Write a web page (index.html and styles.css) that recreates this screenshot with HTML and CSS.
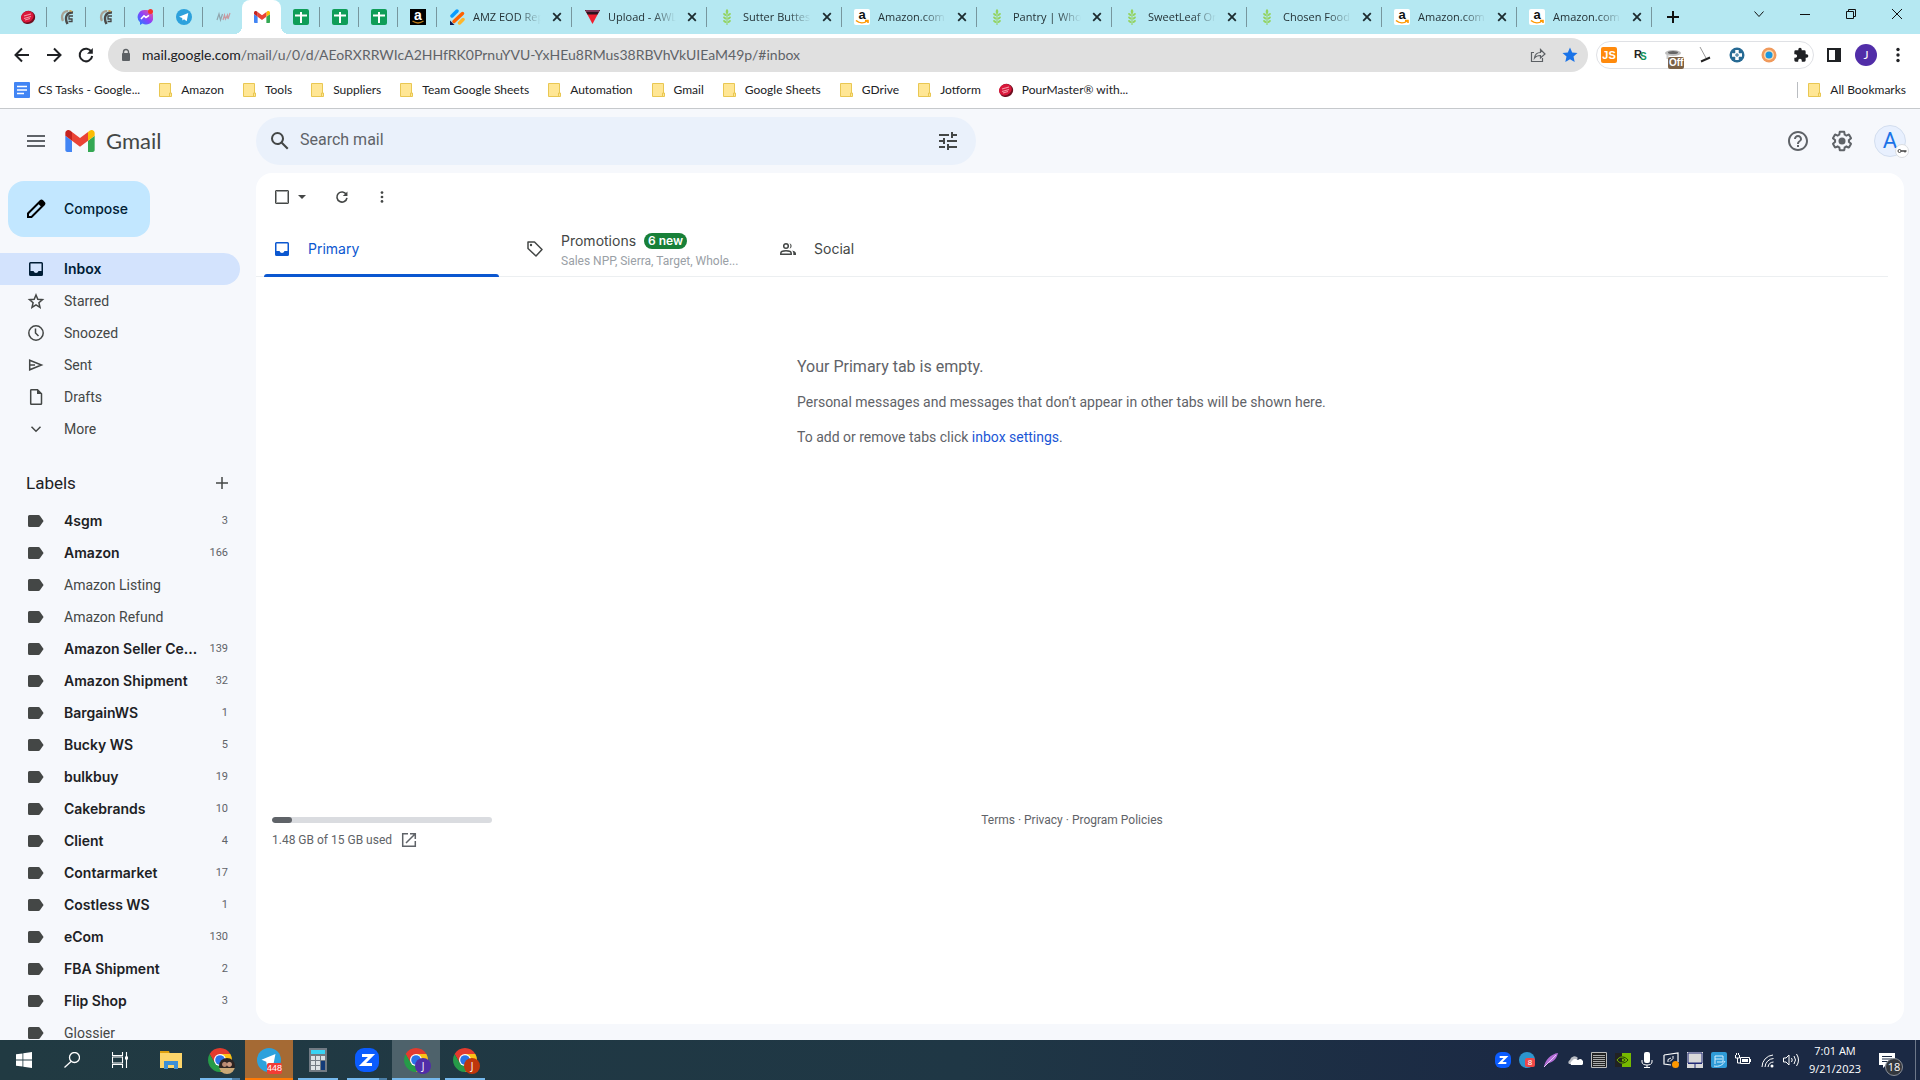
FILE: index.html
```html
<!DOCTYPE html>
<html lang="en">
<head>
<meta charset="utf-8">
<title>Inbox - Gmail</title>
<link rel="stylesheet" href="styles.css">
</head>
<body>
<svg class="sprite" aria-hidden="true">
  <symbol id="pour" viewBox="0 0 16 16"><ellipse cx="8" cy="8.500" rx="7" ry="6.500" fill="#6d0f20" transform="rotate(-25 8 8)"/><ellipse cx="7.500" cy="7.500" rx="6.500" ry="5.500" fill="#d9183b" transform="rotate(-25 8 8)"/><path d="M4 7l7-2M4 9.500l7-2M5 11l5-1.500" stroke="#f59aa8" stroke-width="1.200"/></symbol>
  <symbol id="swirl" viewBox="0 0 16 16"><path d="M9 2C4 2 1.500 7 4 12" fill="none" stroke="#a8a294" stroke-width="2.200"/><path d="M14 3.500C8 3 5 8 8.500 15" fill="none" stroke="#4a4a48" stroke-width="2.400"/><path d="M14 7H10v3h3v2.500H9.500" fill="none" stroke="#444" stroke-width="1.300"/><path d="M9 2l3-1 1.500 2z" fill="#d79a35"/></symbol>
  <symbol id="sheet" viewBox="0 0 16 16"><rect width="16" height="16" rx="2" fill="#0f9d58"/><path d="M8 3v11M2 6.500h12" stroke="#fff" stroke-width="2"/></symbol>
  <symbol id="gmail" viewBox="52 42 88 66"><path fill="#4285f4" d="M58 108h14V74L52 59v43c0 3.320 2.690 6 6 6"/><path fill="#34a853" d="M120 108h14c3.320 0 6-2.690 6-6V59l-20 15"/><path fill="#fbbc04" d="M120 48v26l20-15v-8c0-7.420-8.470-11.650-14.400-7.200"/><path fill="#ea4335" d="M72 74V48l24 18 24-18v26L96 92"/><path fill="#c5221f" d="M52 51v8l20 15V48l-5.600-4.200c-5.940-4.450-14.400-.220-14.400 7.200"/></symbol>
  <symbol id="amz" viewBox="0 0 16 16"><rect width="16" height="16" rx="2" fill="#fff"/><text x="8" y="10" text-anchor="middle" font-family="Liberation Sans, sans-serif" font-weight="700" font-size="13" fill="#111">a</text><path d="M2 11.500c3.500 3 8 3 11 .5M11 11.500h3v2.500" fill="none" stroke="#f90" stroke-width="1.600"/></symbol>
  <symbol id="amzdark" viewBox="0 0 16 16"><rect width="16" height="16" fill="#000"/><text x="8" y="10.500" text-anchor="middle" font-family="Liberation Sans, sans-serif" font-weight="700" font-size="14" fill="#fff">a</text><path d="M2.500 12c3.500 2.500 7.500 2.500 11 0" fill="none" stroke="#b97816" stroke-width="1.300"/></symbol>
  <symbol id="wheat" viewBox="0 0 16 16"><path d="M8 16V3" stroke="#8fcf5a"/><g fill="#93d35f"><ellipse cx="8" cy="2.500" rx="1.300" ry="2.200"/><ellipse cx="5.800" cy="5.500" rx="2" ry="1.100" transform="rotate(40 5.800 5.500)"/><ellipse cx="10.200" cy="5.500" rx="2" ry="1.100" transform="rotate(-40 10.200 5.500)"/><ellipse cx="5.800" cy="9" rx="2" ry="1.100" transform="rotate(40 5.800 9)"/><ellipse cx="10.200" cy="9" rx="2" ry="1.100" transform="rotate(-40 10.200 9)"/><ellipse cx="5.800" cy="12.500" rx="2" ry="1.100" transform="rotate(40 5.800 12.500)"/><ellipse cx="10.200" cy="12.500" rx="2" ry="1.100" transform="rotate(-40 10.200 12.500)"/></g></symbol>
  <symbol id="x" viewBox="0 0 16 16"><path d="M4.200 4.200l7.600 7.600M11.800 4.200l-7.600 7.600" stroke="#1c2b2f" stroke-width="1.800"/></symbol>
  <symbol id="tele" viewBox="0 0 16 16"><circle cx="8" cy="8" r="8" fill="#2da1dc"/><path d="M3 7.800l9.300-3.800-1.600 8.200-2.700-2-1.500 1.400-.3-2.500z" fill="#fff"/></symbol>
  <symbol id="folder" viewBox="0 0 16 16"><path d="M2.500 1.500h11v9.500h1v3.500h-12z" fill="#ffe694" stroke="#e9c752"/><path d="M12.500 14.500v-3.500h1.500" fill="none" stroke="#e9c752"/></symbol>
  <symbol id="label" viewBox="0 0 20 20"><path fill="#444746" d="M2 5.500A1.500 1.500 0 0 1 3.500 4h9c.6 0 1 .2 1.400.7L17.600 10l-3.700 5.300c-.4.500-.8.700-1.400.7h-9A1.500 1.500 0 0 1 2 14.500z"/></symbol>
  <symbol id="inbox" viewBox="0 0 20 20"><path fill="currentColor" fill-rule="evenodd" d="M4.500 3A1.500 1.500 0 0 0 3 4.500v11A1.500 1.500 0 0 0 4.500 17h11a1.500 1.500 0 0 0 1.500-1.500v-11A1.500 1.500 0 0 0 15.500 3zM4.500 4.500h11v7.500h-3l-1 1.500-1.500.5-1.500-.5-1-1.500h-3z"/></symbol>
  <symbol id="dots" viewBox="0 0 20 20"><g fill="currentColor"><circle cx="10" cy="4.500" r="1.700"/><circle cx="10" cy="10" r="1.700"/><circle cx="10" cy="15.500" r="1.700"/></g></symbol>
  <symbol id="reload" viewBox="0 0 20 20"><path d="M15.500 7A6.300 6.300 0 1 0 16.200 11" fill="none" stroke="currentColor" stroke-width="2"/><path d="M16.800 3v5.800H11z" fill="currentColor"/></symbol>
  <symbol id="chrome" viewBox="4 4 40 40"><path fill="#e33b2e" d="M6.680 14A20 20 0 0 1 41.320 14H24L15.340 29Z"/><path fill="#fbc116" d="M41.320 14A20 20 0 0 1 24 44L32.660 29 24 14Z"/><path fill="#269b48" d="M6.680 14A20 20 0 0 0 24 44L32.660 29H15.340Z"/><circle cx="24" cy="24" r="10" fill="#fff"/><circle cx="24" cy="24" r="8" fill="#2a73e8"/></symbol>
  <symbol id="zoomapp" viewBox="0 0 24 24"><rect width="24" height="24" rx="9" fill="#0b5cff"/><path d="M7 7.500h9.500L7.500 16.500H17" fill="none" stroke="#fff" stroke-width="3"/></symbol>
</svg>

<div class="browser">
  <div class="tabstrip">
    <div class="tab pinned"><svg class="i16"><use href="#pour"/></svg></div>
    <div class="tab pinned"><svg class="i16"><use href="#swirl"/></svg></div>
    <div class="tab pinned"><svg class="i16"><use href="#swirl"/></svg></div>
    <div class="tab pinned"><svg class="i16" viewBox="0 0 16 16"><defs><linearGradient id="ms" x1="0" y1="1" x2="1" y2="0"><stop offset="0" stop-color="#1688ff"/><stop offset=".5" stop-color="#8a3ffc"/><stop offset="1" stop-color="#ff5c87"/></linearGradient></defs><path fill="url(#ms)" d="M8 1a7 7 0 0 0-5 12.200V16l2.500-1.500A7.300 7.300 0 1 0 8 1z"/><path d="M4 10l3-3.200 2 1.600 3-2" fill="none" stroke="#fff" stroke-width="1.600"/><circle cx="13.500" cy="2.500" r="2.500" fill="#f5342b"/></svg></div>
    <div class="tab pinned"><svg class="i16"><use href="#tele"/></svg></div>
    <div class="tab pinned plain"><svg class="i16" viewBox="0 0 16 16"><path d="M2 11l2-6 1.500 6 2-6" fill="none" stroke="#8fa5ad" stroke-width="1.200"/><path d="M8 11l1.500-5 1 4 2-4 .5 4 2-6" fill="none" stroke="#c99aa0" stroke-width="1.200"/></svg></div>
    <div class="tab pinned plain active"><svg class="i16"><use href="#gmail"/></svg></div>
    <div class="tab pinned"><svg class="i16"><use href="#sheet"/></svg></div>
    <div class="tab pinned"><svg class="i16"><use href="#sheet"/></svg></div>
    <div class="tab pinned"><svg class="i16"><use href="#sheet"/></svg></div>
    <div class="tab pinned"><svg class="i16"><use href="#amzdark"/></svg></div>
    <div class="tab"><svg class="i16" viewBox="0 0 16 16"><g stroke-width="3.500" stroke-linecap="round"><path d="M3 7l5-5" stroke="#0a9bff"/><path d="M5 12.500l8.500-8" stroke="#ff6100"/><path d="M10.500 14l3.500-3.500" stroke="#ffb629"/></g><path d="M1 11.500V16h4.500z" fill="#0a1551"/></svg><span class="tab-title">AMZ EOD Rep</span><button class="close" aria-label="Close tab"><svg class="i16"><use href="#x"/></svg></button></div>
    <div class="tab"><svg class="i16" viewBox="0 0 16 16"><path d="M1 1h15L8.500 15z" fill="#ef1f2f"/><path d="M1 1h15l-2.500 4.500h-10z" fill="#2c1420"/><path d="M2 2h13" stroke="#c95a8d"/></svg><span class="tab-title">Upload - AWL</span><button class="close" aria-label="Close tab"><svg class="i16"><use href="#x"/></svg></button></div>
    <div class="tab"><svg class="i16"><use href="#wheat"/></svg><span class="tab-title">Sutter Buttes</span><button class="close" aria-label="Close tab"><svg class="i16"><use href="#x"/></svg></button></div>
    <div class="tab"><svg class="i16"><use href="#amz"/></svg><span class="tab-title">Amazon.com</span><button class="close" aria-label="Close tab"><svg class="i16"><use href="#x"/></svg></button></div>
    <div class="tab"><svg class="i16"><use href="#wheat"/></svg><span class="tab-title">Pantry | Whol</span><button class="close" aria-label="Close tab"><svg class="i16"><use href="#x"/></svg></button></div>
    <div class="tab"><svg class="i16"><use href="#wheat"/></svg><span class="tab-title">SweetLeaf Or</span><button class="close" aria-label="Close tab"><svg class="i16"><use href="#x"/></svg></button></div>
    <div class="tab"><svg class="i16"><use href="#wheat"/></svg><span class="tab-title">Chosen Food</span><button class="close" aria-label="Close tab"><svg class="i16"><use href="#x"/></svg></button></div>
    <div class="tab"><svg class="i16"><use href="#amz"/></svg><span class="tab-title">Amazon.com</span><button class="close" aria-label="Close tab"><svg class="i16"><use href="#x"/></svg></button></div>
    <div class="tab"><svg class="i16"><use href="#amz"/></svg><span class="tab-title">Amazon.com</span><button class="close" aria-label="Close tab"><svg class="i16"><use href="#x"/></svg></button></div>
    <button class="newtab" aria-label="New tab"><svg class="i16" viewBox="0 0 16 16"><path d="M8 2v12M2 8h12" stroke="#111" stroke-width="2"/></svg></button>
    <div class="window-controls">
      <button aria-label="Search tabs"><svg class="i16" viewBox="0 0 16 16"><path d="M3.500 5.500L8 10.500l4.500-5" fill="none" stroke="#111"/></svg></button>
      <button aria-label="Minimize"><svg class="i16" viewBox="0 0 16 16"><path d="M3 8.500h10" stroke="#111"/></svg></button>
      <button aria-label="Restore"><svg class="i16" viewBox="0 0 16 16"><path d="M3.500 5.500h7v7h-7zM5.500 5.500v-2h7v7h-2" fill="none" stroke="#111"/></svg></button>
      <button aria-label="Close"><svg class="i16" viewBox="0 0 16 16"><path d="M3 3l10 10M13 3L3 13" stroke="#111"/></svg></button>
    </div>
  </div>

  <div class="toolbar">
    <button class="nav-btn" aria-label="Back"><svg class="i20" viewBox="0 0 20 20"><path d="M17 10H4M10 3.500L3.500 10l6.500 6.500" fill="none" stroke="#1f2124" stroke-width="2"/></svg></button>
    <button class="nav-btn" aria-label="Forward"><svg class="i20" viewBox="0 0 20 20"><path d="M3 10h13M10 3.500l6.500 6.500-6.500 6.500" fill="none" stroke="#1f2124" stroke-width="2"/></svg></button>
    <button class="nav-btn" aria-label="Reload"><svg class="i20"><use href="#reload"/></svg></button>
    <div class="omnibox">
      <svg class="i16" viewBox="0 0 16 16"><rect x="4" y="6" width="8" height="8" rx="1" fill="#5c6064"/><path d="M5.500 7V5a2.500 2.500 0 0 1 5 0v2" fill="none" stroke="#5c6064" stroke-width="1.400"/></svg>
      <a class="url" href="#inbox"><span class="host">mail.google.com</span>/mail/u/0/d/AEoRXRRWIcA2HHfRK0PrnuYVU-YxHEu8RMus38RBVhVkUIEaM49p/#inbox</a>
      <button aria-label="Share"><svg class="i16" viewBox="0 0 16 16"><path d="M4 5.500H1.500v9h11V11M4.500 11c.5-4 3-5.500 6-5.500V2.500L15 7l-4.500 4V8.500c-3 0-4.500.5-6 2.500z" fill="none" stroke="#5c6064" stroke-width="1.200"/></svg></button>
      <button aria-label="Bookmark this tab"><svg class="i16" viewBox="0 0 16 16"><path fill="#1a73e8" d="M8 .5l2.200 5 5.300.5-4 3.600 1.200 5.400L8 12.200 3.300 15l1.200-5.400-4-3.600 5.300-.5z"/></svg></button>
    </div>
    <div class="extensions">
      <svg class="i16" viewBox="0 0 16 16"><rect width="16" height="16" rx="2" fill="#ff8a0c"/><text x="8" y="12" text-anchor="middle" font-family="Liberation Sans, sans-serif" font-weight="700" font-size="11" fill="#fff">JS</text></svg>
      <svg class="i16" viewBox="0 0 16 16"><text x="1" y="11" font-family="Liberation Sans, sans-serif" font-weight="700" font-size="11" fill="#222">R</text><text x="7" y="13" font-family="Liberation Sans, sans-serif" font-weight="700" font-size="10" fill="#12935b">S</text></svg>
      <span class="ext-off"><svg class="i16" viewBox="0 0 16 16"><ellipse cx="8" cy="6" rx="8" ry="3" fill="#bdbdbd"/><ellipse cx="8" cy="5.500" rx="5" ry="1.500" fill="#666"/><path d="M1.500 7v5h2V8z" fill="#c9c9c9"/></svg><span class="off-badge">Off</span></span>
      <svg class="i16" viewBox="0 0 16 16"><path d="M3 0l6 11" stroke="#999"/><path d="M4 14.500l9-4" stroke="#222" stroke-width="2"/></svg>
      <svg class="i16" viewBox="0 0 16 16"><circle cx="8" cy="8" r="7.500" fill="#276a94"/><path d="M8 3v10M3 8h10" stroke="#fff" stroke-width="3.500"/><path d="M6 8h4M8 6v4" stroke="#276a94"/></svg>
      <svg class="i16" viewBox="0 0 16 16"><circle cx="8" cy="8" r="7.500" fill="#f09a5c"/><circle cx="8" cy="8" r="5" fill="#fbd9ae"/><circle cx="8" cy="8" r="3.500" fill="#1a96df"/></svg>
      <svg class="i16" viewBox="0 0 24 24"><path fill="#1f2124" d="M20.500 11H19V7a2 2 0 0 0-2-2h-4V3.500a2.500 2.500 0 0 0-5 0V5H4a2 2 0 0 0-2 2v3.800h1.500a2.700 2.700 0 0 1 0 5.400H2V20a2 2 0 0 0 2 2h3.800v-1.500a2.700 2.700 0 0 1 5.400 0V22H17a2 2 0 0 0 2-2v-4h1.500a2.500 2.500 0 0 0 0-5z"/></svg>
    </div>
    <div class="toolbar-end">
      <button aria-label="Side panel"><svg class="i16" viewBox="0 0 16 16"><path fill="#1f2124" fill-rule="evenodd" d="M1 1h14v14H1zM3 3h6v10H3z"/></svg></button>
      <button aria-label="Profile"><span class="profile">J</span></button>
      <button aria-label="Browser menu"><svg class="i20"><use href="#dots"/></svg></button>
    </div>
  </div>

  <nav class="bookmarks" aria-label="Bookmarks">
    <a href="#cs"><svg class="i16" viewBox="0 0 16 16"><rect width="16" height="16" rx="1" fill="#4285f4"/><path d="M3 4.500h10M3 8h10M3 11.500h7" stroke="#fff" stroke-width="1.500"/></svg>CS Tasks - Google...</a>
    <a href="#amazon"><svg class="i16"><use href="#folder"/></svg>Amazon</a>
    <a href="#tools"><svg class="i16"><use href="#folder"/></svg>Tools</a>
    <a href="#suppliers"><svg class="i16"><use href="#folder"/></svg>Suppliers</a>
    <a href="#team"><svg class="i16"><use href="#folder"/></svg>Team Google Sheets</a>
    <a href="#automation"><svg class="i16"><use href="#folder"/></svg>Automation</a>
    <a href="#gmail-folder"><svg class="i16"><use href="#folder"/></svg>Gmail</a>
    <a href="#sheets"><svg class="i16"><use href="#folder"/></svg>Google Sheets</a>
    <a href="#gdrive"><svg class="i16"><use href="#folder"/></svg>GDrive</a>
    <a href="#jotform"><svg class="i16"><use href="#folder"/></svg>Jotform</a>
    <a href="#pourmaster"><svg class="i16"><use href="#pour"/></svg>PourMaster® with...</a>
    <a class="all" href="#all"><svg class="i16"><use href="#folder"/></svg>All Bookmarks</a>
  </nav>
</div>

<div class="app">
  <header class="header">
    <div class="brand">
      <button aria-label="Main menu"><svg class="i20" viewBox="0 0 20 20"><path d="M1 5h18M1 10h18M1 15h18" stroke="#5f6368" stroke-width="2"/></svg></button>
      <a class="logo" href="#inbox"><svg class="gmail-mark"><use href="#gmail"/></svg>Gmail</a>
    </div>
    <form class="search" role="search">
      <svg class="i24" viewBox="0 0 24 24"><path fill="#444746" d="M20.490 19l-5.730-5.730C15.530 12.200 16 10.910 16 9.500A6.500 6.500 0 1 0 9.500 16c1.410 0 2.700-.470 3.770-1.240L19 20.490 20.490 19zM5 9.500C5 7.010 7.010 5 9.500 5S14 7.010 14 9.500 11.990 14 9.500 14 5 11.990 5 9.500z"/></svg>
      <input type="text" aria-label="Search mail" placeholder="Search mail">
      <button type="button" aria-label="Search options"><svg class="i24" viewBox="0 0 24 24"><path fill="#444746" d="M3 17v2h6v-2H3zM3 5v2h10V5H3zm10 16v-2h8v-2h-8v-2h-2v6h2zM7 9v2H3v2h4v2h2V9H7zm14 4v-2H11v2h10zm-6-4h2V7h4V5h-4V3h-2v6z"/></svg></button>
    </form>
    <div class="account">
      <button aria-label="Support"><svg class="i24" viewBox="0 0 24 24"><path fill="#5f6368" d="M11 18h2v-2h-2v2zm1-16C6.480 2 2 6.480 2 12s4.480 10 10 10 10-4.480 10-10S17.520 2 12 2zm0 18c-4.410 0-8-3.590-8-8s3.590-8 8-8 8 3.590 8 8-3.590 8-8 8zm0-14c-2.210 0-4 1.790-4 4h2c0-1.100.9-2 2-2s2 .9 2 2c0 2-3 1.750-3 5h2c0-2.250 3-2.500 3-5 0-2.210-1.790-4-4-4z"/></svg></button>
      <button aria-label="Settings"><svg class="i24" viewBox="0 0 24 24"><path fill="#5f6368" d="M13.850 22.250h-3.700c-.74 0-1.360-.54-1.450-1.270l-.27-1.890c-.27-.14-.53-.29-.79-.46l-1.800.72c-.7.260-1.470-.03-1.810-.65L2.200 15.530c-.35-.66-.2-1.440.36-1.880l1.530-1.190c-.01-.15-.02-.3-.02-.46 0-.15.010-.31.020-.46l-1.520-1.190c-.59-.45-.74-1.260-.37-1.880l1.850-3.190c.34-.62 1.110-.9 1.790-.63l1.810.73c.26-.17.52-.32.78-.46l.27-1.910c.09-.7.71-1.250 1.440-1.250h3.700c.74 0 1.360.54 1.450 1.270l.27 1.890c.27.14.53.29.79.46l1.800-.72c.71-.26 1.480.03 1.820.65l1.840 3.180c.36.66.2 1.440-.36 1.880l-1.520 1.190c.010.15.020.3.020.46s-.01.31-.02.46l1.520 1.190c.56.45.72 1.230.37 1.860l-1.860 3.220c-.34.62-1.110.9-1.800.63l-1.800-.72c-.26.17-.52.32-.78.46l-.27 1.910c-.1.680-.72 1.220-1.460 1.220zm-3.230-2h2.760l.37-2.550.53-.22c.44-.18.88-.44 1.340-.78l.45-.34 2.380.96 1.380-2.400-2.030-1.580.07-.56c.03-.26.06-.51.06-.78s-.03-.53-.06-.78l-.07-.56 2.030-1.580-1.390-2.400-2.390.96-.45-.35c-.42-.32-.87-.58-1.330-.77l-.52-.22-.37-2.550h-2.760l-.37 2.550-.53.21c-.44.19-.88.44-1.340.79l-.45.33-2.380-.95-1.390 2.390 2.030 1.580-.07.56a7 7 0 0 0-.06.79c0 .26.02.53.06.78l.07.56-2.030 1.580 1.380 2.400 2.390-.96.45.35c.43.33.86.58 1.330.77l.53.22.38 2.550z"/><circle cx="12" cy="12" r="3.500" fill="#5f6368"/></svg></button>
      <button class="avatar" aria-label="Account">A<svg class="key" viewBox="0 0 14 14"><circle cx="7" cy="7" r="6.500" fill="#fff" stroke="#dadce0"/><circle cx="4.500" cy="7" r="1.500" fill="none" stroke="#444"/><path d="M6 7h5.500M10 7v1.500" stroke="#444" stroke-width="1.300"/></svg></button>
    </div>
  </header>

  <aside class="sidebar">
    <button class="compose"><svg class="i24" viewBox="0 0 24 24"><path d="M4 20v-3.500L16.500 4c.6-.6 1.300-.6 1.900 0L20 5.600c.6.6.6 1.300 0 1.900L7.500 20z" fill="none" stroke="#000" stroke-width="2"/><path d="M14 6.500L16.500 4c.6-.6 1.300-.6 1.900 0L20 5.600c.6.6.6 1.300 0 1.900L17.500 10z"/></svg>Compose</button>
    <nav aria-label="Mailboxes">
      <a class="row selected" href="#inbox"><svg class="i20"><use href="#inbox"/></svg><span>Inbox</span></a>
      <a class="row" href="#starred"><svg class="i20" viewBox="0 0 20 20"><path d="M10 4l1.800 4.300 4.700.4-3.600 3 1.100 4.600-4-2.500-4 2.500 1.100-4.600-3.600-3 4.700-.4z" fill="none" stroke="#444746" stroke-width="1.500"/></svg><span>Starred</span></a>
      <a class="row" href="#snoozed"><svg class="i20" viewBox="0 0 20 20"><circle cx="10" cy="10" r="7.200" fill="none" stroke="#444746" stroke-width="1.500"/><path d="M9.500 5.500V10l3 3" fill="none" stroke="#444746" stroke-width="1.500"/></svg><span>Snoozed</span></a>
      <a class="row" href="#sent"><svg class="i20" viewBox="0 0 20 20"><path d="M3.700 5.200L15.500 10 3.700 14.800zM3.700 10H9" fill="none" stroke="#444746" stroke-width="1.500"/></svg><span>Sent</span></a>
      <a class="row" href="#drafts"><svg class="i20" viewBox="0 0 20 20"><path d="M5.500 2.700h6l4 4v10c0 .4-.2.600-.6.600H5.300c-.4 0-.6-.2-.6-.6V3.300c0-.4.200-.6.800-.6z" fill="none" stroke="#444746" stroke-width="1.500"/><path d="M11 2.500V7h5z" fill="#444746"/></svg><span>Drafts</span></a>
      <a class="row" href="#more"><svg class="i20" viewBox="0 0 20 20"><path d="M5.500 7.800L10 12.200l4.500-4.400" fill="none" stroke="#444746" stroke-width="1.500"/></svg><span>More</span></a>
    </nav>
    <div class="labels-head"><h2>Labels</h2><button aria-label="Create new label"><svg class="i20" viewBox="0 0 20 20"><path d="M10 4v12M4 10h12" stroke="#444746" stroke-width="1.500"/></svg></button></div>
    <nav aria-label="Labels">
      <a class="row unread" href="#l1"><svg class="i20"><use href="#label"/></svg><span>4sgm</span><small>3</small></a>
      <a class="row unread" href="#l2"><svg class="i20"><use href="#label"/></svg><span>Amazon</span><small>166</small></a>
      <a class="row" href="#l3"><svg class="i20"><use href="#label"/></svg><span>Amazon Listing</span></a>
      <a class="row" href="#l4"><svg class="i20"><use href="#label"/></svg><span>Amazon Refund</span></a>
      <a class="row unread" href="#l5"><svg class="i20"><use href="#label"/></svg><span>Amazon Seller Ce...</span><small>139</small></a>
      <a class="row unread" href="#l6"><svg class="i20"><use href="#label"/></svg><span>Amazon Shipment</span><small>32</small></a>
      <a class="row unread" href="#l7"><svg class="i20"><use href="#label"/></svg><span>BargainWS</span><small>1</small></a>
      <a class="row unread" href="#l8"><svg class="i20"><use href="#label"/></svg><span>Bucky WS</span><small>5</small></a>
      <a class="row unread" href="#l9"><svg class="i20"><use href="#label"/></svg><span>bulkbuy</span><small>19</small></a>
      <a class="row unread" href="#l10"><svg class="i20"><use href="#label"/></svg><span>Cakebrands</span><small>10</small></a>
      <a class="row unread" href="#l11"><svg class="i20"><use href="#label"/></svg><span>Client</span><small>4</small></a>
      <a class="row unread" href="#l12"><svg class="i20"><use href="#label"/></svg><span>Contarmarket</span><small>17</small></a>
      <a class="row unread" href="#l13"><svg class="i20"><use href="#label"/></svg><span>Costless WS</span><small>1</small></a>
      <a class="row unread" href="#l14"><svg class="i20"><use href="#label"/></svg><span>eCom</span><small>130</small></a>
      <a class="row unread" href="#l15"><svg class="i20"><use href="#label"/></svg><span>FBA Shipment</span><small>2</small></a>
      <a class="row unread" href="#l16"><svg class="i20"><use href="#label"/></svg><span>Flip Shop</span><small>3</small></a>
      <a class="row" href="#l17"><svg class="i20"><use href="#label"/></svg><span>Glossier</span></a>
    </nav>
  </aside>

  <main class="card">
    <div class="actions">
      <input type="checkbox" aria-label="Select all">
      <button class="caret" aria-label="Select options"><svg viewBox="0 0 8 4"><path d="M0 0h8L4 4z" fill="#444746"/></svg></button>
      <button class="refresh" aria-label="Refresh"><svg class="i16" viewBox="0 0 20 20"><use href="#reload"/></svg></button>
      <button aria-label="More actions"><svg class="i16" viewBox="0 0 20 20"><use href="#dots"/></svg></button>
    </div>
    <div class="categories" role="tablist">
      <button class="category current" role="tab" aria-selected="true"><svg class="i20"><use href="#inbox"/></svg><span>Primary</span></button>
      <button class="category" role="tab" aria-selected="false"><svg class="i20" viewBox="0 0 20 20"><path d="M3 3h6.500l7.500 7.500-6 6.500L3 9.500z" fill="none" stroke="#444746" stroke-width="1.500" stroke-linejoin="round"/><circle cx="6" cy="6" r="1.200" fill="#444746"/></svg><span class="stack"><span class="promo">Promotions <b class="badge">6 new</b></span><span class="senders">Sales NPP, Sierra, Target, Whole...</span></span></button>
      <button class="category" role="tab" aria-selected="false"><svg class="i20" viewBox="0 0 20 20"><g fill="none" stroke="#444746" stroke-width="1.500"><circle cx="8" cy="7" r="2.300"/><path d="M2.800 15.200v-1c0-1.700 2.700-2.500 5.200-2.500s5.200.8 5.200 2.500v1z"/></g><path d="M11.500 4.200a2.900 2.900 0 0 1 0 5.600c1.300-1.700 1.300-3.900 0-5.600zM14 11.500c2.200.5 4 1.400 4 3V16h-2.700v-1.700c0-1.100-.5-2-1.300-2.800z" fill="#444746"/></svg><span>Social</span></button>
    </div>
    <section class="empty">
      <div class="empty-text">
        <h1>Your Primary tab is empty.</h1>
        <p>Personal messages and messages that don’t appear in other tabs will be shown here.</p>
        <p>To add or remove tabs click <a href="#settings">inbox settings</a>.</p>
      </div>
    </section>
    <footer class="footer">
      <div class="storage">
        <div class="meter"><div class="meter-fill"></div></div>
        <div class="usage">1.48 GB of 15 GB used <a href="#storage" aria-label="Manage storage"><svg class="i16" viewBox="0 0 16 16"><path d="M7 1.700H1.700v12.600h12.600V9M5 11L14 2M9 1.700h5.300V7" fill="none" stroke="#5f6368" stroke-width="1.500"/></svg></a></div>
      </div>
      <div class="legal"><a href="#terms">Terms</a> · <a href="#privacy">Privacy</a> · <a href="#policies">Program Policies</a></div>
    </footer>
  </main>
</div>

<div class="taskbar">
  <button aria-label="Start"><svg class="i16" viewBox="0 0 16 16"><path fill="#fff" d="M0 2.300l6.500-.9v6.200H0zM7.300 1.300L16 0v7.600H7.300zM0 8.400h6.500v6.200L0 13.700zM7.300 8.400H16V16l-8.700-1.300z"/></svg></button>
  <button aria-label="Search"><svg class="i16" viewBox="0 0 16 16"><circle cx="10.500" cy="5.500" r="5" fill="none" stroke="#fff" stroke-width="1.300"/><path d="M7 9.500L.5 15.500" stroke="#fff" stroke-width="1.300"/></svg></button>
  <button aria-label="Task view"><svg class="i16" viewBox="0 0 16 16"><path d="M.5 0v3.500h10V0M.5 16v-3.500h10V16M.5 5v6h10V5zM14.500 0v16" fill="none" stroke="#fff" stroke-width="1.100"/><path d="M13 4.500h3v3h-3z" fill="#fff"/></svg></button>
  <div class="apps">
    <button aria-label="File Explorer"><svg class="i24" viewBox="0 0 24 24"><path fill="#e0a10f" d="M1 3h9l1 3H1z"/><path fill="#fdd56a" d="M1 5h22v15H1z"/><path fill="#3d8fd6" d="M5 21v-8h14v8h-4v-4H9v4z"/></svg></button>
    <button class="open multi" aria-label="Chrome"><svg class="i24"><use href="#chrome"/></svg><span class="mini photo"></span></button>
    <button class="open alert" aria-label="Telegram"><svg class="i24"><use href="#tele"/></svg><span class="count">448</span></button>
    <button class="open" aria-label="Calculator"><svg class="i24" viewBox="0 0 24 24"><path fill="#727b84" d="M3 0h18v24H3z"/><path fill="#38d3f5" d="M5 2h14v4H5z"/><path d="M5 10h9M5 15h9M5 20h9" stroke="#dce2e6" stroke-width="4" stroke-dasharray="4 1"/><path fill="#dce2e6" d="M15 8h4v4h-4z"/><path fill="#123a78" d="M15 13h4v9h-4z"/></svg></button>
    <button class="open multi" aria-label="Zoom"><svg class="i24"><use href="#zoomapp"/></svg></button>
    <button class="open focused" aria-label="Chrome, profile J"><svg class="i24"><use href="#chrome"/></svg><span class="mini">J</span></button>
    <button class="open" aria-label="Chrome, second profile"><svg class="i24"><use href="#chrome"/></svg><span class="mini orange">J</span></button>
  </div>
  <div class="tray">
    <span><svg class="i16"><use href="#zoomapp"/></svg></span>
    <span><svg class="i16" viewBox="0 0 16 16"><circle cx="8" cy="8" r="8" fill="#2d95cd"/><rect x="6" y="6" width="10" height="9" rx="2" fill="#f04747"/><text x="11" y="13" text-anchor="middle" font-family="Liberation Sans, sans-serif" font-size="8" fill="#fff">8</text></svg></span>
    <span><svg class="i16" viewBox="0 0 16 16"><path fill="#b46fd8" d="M1 15C2 8 8 2 15 1c-1 5-5 10-11 10.500z"/><path d="M1 15L13 3" stroke="#e7c7f7"/></svg></span>
    <span><svg class="i16" viewBox="0 0 16 16"><path fill="#b9bcc4" d="M3 8a4.500 4.500 0 0 1 8-2l-6 6H2a2.500 2.500 0 0 1 1-4z"/><path fill="#fff" d="M4 13a3 3 0 0 1 1-4 4 4 0 0 1 6-1 3 3 0 0 1 4 5z"/></svg></span>
    <span><svg class="i16" viewBox="0 0 16 16"><path fill="#222" stroke="#bbb" d="M.5.500h15v15H.5z"/><path d="M2 3.500h12M2 5.500h12M2 7.500h12M2 9.500h12M2 11.500h12M2 13.500h12" stroke="#aaa"/></svg></span>
    <span><svg class="i16" viewBox="0 0 16 16"><path fill="#222" d="M0 1h16v14H0z"/><path fill="#76b900" d="M7 1h9v14H7z"/><path d="M2 8c3-4 8-4 11 0-3 4-8 4-11 0zM5 8c1-2 4-2 5 0-1 2-4 2-5 0z" fill="none" stroke="#263c05"/><path d="M2 8c1.500-2 3-3 5-3M2 8c1.500 2 3 3 5 3" fill="none" stroke="#76b900"/></svg></span>
    <span><svg class="i16" viewBox="0 0 16 16"><rect x="5" y="0" width="6" height="11" rx="2" fill="#fff"/><path d="M3 8v2c0 2 2 3 5 3s5-1 5-3V8M8 13v3M5 15.500h6" fill="none" stroke="#fff"/></svg></span>
    <span><svg class="i16" viewBox="0 0 16 16"><path d="M1 3l14-2v9M1 3v9l7 1" fill="none" stroke="#fff" stroke-width="1.200"/><path d="M5 10V7.500l3-1.500M10 4v2.500l-3 3" fill="none" stroke="#fff"/><circle cx="12.500" cy="12.500" r="3.500" fill="#ff9800"/></svg></span>
    <span><svg class="i16" viewBox="0 0 16 16"><path fill="#d9d9d9" d="M0 0h16v16H0z"/><path d="M1 1h14v10H1zM1 11.500h14M8 11v5" fill="none" stroke="#222b77"/></svg></span>
    <span><svg class="i16" viewBox="0 0 16 16"><rect width="16" height="16" rx="2" fill="#2f9bd8"/><path d="M4 12V4h8v6H6M4 7h7M3 14c5 1 9-1 11-5" fill="none" stroke="#d7f0ff"/></svg></span>
    <span><svg class="i16" viewBox="0 0 16 16"><path d="M5.500 5.500h9v6h-9zM.5 3v3h4V3M1.500 1v2M3.500 1v2M2.500 6v5h3" fill="none" stroke="#fff"/><path fill="#fff" d="M7 7h6v3H7zM15 7h1v3h-1z"/></svg></span>
    <span><svg class="i16" viewBox="0 0 16 16"><path d="M3 15A12 12 0 0 1 14 3M6 15a9 9 0 0 1 8.500-8.500M9 15a6 6 0 0 1 5.500-5" fill="none" stroke="#fff"/><circle cx="13" cy="14" r="1.500" fill="#fff"/></svg></span>
    <span><svg class="i16" viewBox="0 0 16 16"><path d="M.5 6h2.500l3-3v10l-3-3H.5zM8.500 6q1.500 2 0 4M11 4q3 4 0 8M13.500 2q4 6 0 12" fill="none" stroke="#fff"/></svg></span>
  </div>
  <div class="clock"><span>7:01 AM</span><span>9/21/2023</span></div>
  <button class="notify" aria-label="Notifications"><svg class="i16" viewBox="0 0 16 16"><path fill="#fff" d="M0 1h16v12H7l-3 3v-3H0z"/><path d="M3 4.500h10M3 7h10M3 9.500h7" stroke="#1b2a44"/></svg><span class="notify-count">18</span></button>
  <div class="desktop-peek"></div>
</div>
</body>
</html>
```
FILE: styles.css
```css
* { box-sizing: border-box; }
html, body { margin: 0; height: 100%; }
body {
  display: flex;
  flex-direction: column;
  overflow: hidden;
  font: 14px/20px Roboto, "Liberation Sans", sans-serif;
  color: #202124;
  background: #f6f8fc;
}
button { border: 0; padding: 0; margin: 0; background: none; font: inherit; color: inherit; display: flex; align-items: center; justify-content: center; }
a { color: inherit; text-decoration: none; }
svg { display: block; flex: none; }
.sprite { position: absolute; width: 0; height: 0; }
.i16 { width: 16px; height: 16px; }
.i20 { width: 20px; height: 20px; }
.i24 { width: 24px; height: 24px; }

/* Browser frame */
.browser { flex: none; background: #fff; font: 12px/16px Lato, "Open Sans", sans-serif; border-bottom: 1px solid #c6c9cc; }
.tabstrip { display: flex; height: 34px; padding-left: 8px; background: #b5e8f2; }
.tab { position: relative; display: flex; align-items: center; gap: 8px; flex: 0 1 135px; min-width: 0; padding: 0 7px 0 12px; }
.tab.pinned { flex: 0 0 39px; padding: 0; justify-content: center; }
.tab::after { content: ""; position: absolute; right: 0; top: 7px; width: 1px; height: 20px; background: #77969e; }
.tab.plain::after { display: none; }
.tab.active { background: #fff; border-radius: 8px 8px 0 0; }
.tab.active::before, .tab.active::after { content: ""; display: block; position: absolute; top: auto; bottom: 0; width: 8px; height: 8px; }
.tab.active::before { left: -8px; background: radial-gradient(circle at 0 0, transparent 8px, #fff 8px); }
.tab.active::after { right: -8px; background: radial-gradient(circle at 100% 0, transparent 8px, #fff 8px); }
.tab-title { flex: 1; min-width: 0; font: 11px/16px "Open Sans", sans-serif; white-space: nowrap; color: #243236; -webkit-mask-image: linear-gradient(to right, #000 65%, transparent); mask-image: linear-gradient(to right, #000 65%, transparent); }
.newtab { width: 28px; height: 34px; margin-left: 7px; }
.window-controls { display: flex; margin-left: auto; height: 28px; }
.window-controls button { width: 46px; }

.toolbar { display: flex; align-items: center; gap: 4px; height: 42px; padding: 0 6px 0 8px; }
.nav-btn { width: 28px; height: 28px; color: #1f2124; }
.omnibox { display: flex; align-items: center; flex: 1; min-width: 0; height: 34px; margin-left: 4px; padding: 0 10px; gap: 16px; border-radius: 17px; background: #e0e0e0; }
.url { flex: 1; min-width: 0; margin-left: -8px; white-space: nowrap; font-size: 14px; line-height: 20px; color: #5f6368; }
.host { color: #202124; }
.extensions { display: flex; align-items: center; gap: 16px; height: 28px; margin-left: 4px; padding: 0 4px; border: 1px solid #dfe1e5; border-radius: 14px; }
.ext-off { position: relative; }
.off-badge { position: absolute; left: 3px; top: 10px; padding: 0 1px; border-radius: 2px; background: #7b6145; color: #fff; font: bold 10px/12px "Liberation Sans", sans-serif; }
.toolbar-end { display: flex; }
.toolbar-end button { width: 32px; height: 32px; }
.profile { width: 22px; border-radius: 50%; background: #512da8; color: #fff; line-height: 22px; text-align: center; }

.bookmarks { display: flex; align-items: center; gap: 17px; height: 32px; padding: 0 14px 4px; white-space: nowrap; }
.bookmarks a { display: flex; align-items: center; gap: 8px; }
.bookmarks .all { margin-left: auto; padding-left: 8px; border-left: 1px solid #babdc1; }

/* Mail app */
.app { flex: 1; min-height: 0; display: grid; grid-template-columns: 256px minmax(0, 1fr); grid-template-rows: 64px minmax(0, 1fr); }
.header { grid-column: 1 / -1; display: flex; align-items: center; }
.brand { display: flex; align-items: center; flex: none; width: 256px; padding-left: 26px; gap: 19px; }
.logo { display: flex; align-items: center; gap: 11px; font: 22px/28px Lato, sans-serif; color: #444746; }
.gmail-mark { width: 30px; height: 22px; }
.search { display: flex; align-items: center; flex: 0 1 720px; height: 48px; padding: 0 16px 0 12px; gap: 8px; border-radius: 24px; background: #eaf1fb; }
.search input { flex: 1; min-width: 0; border: 0; outline: 0; padding: 0 0 2px; background: none; font: 16px/20px Roboto, sans-serif; }
.search input::placeholder { color: #5f6368; opacity: 1; }
.account { display: flex; align-items: center; gap: 20px; margin-left: auto; padding-right: 14px; }
.avatar { position: relative; width: 32px; height: 32px; border: 1px solid #d3deef; border-radius: 50%; background: #e8f0fe; color: #1a73e8; font-size: 22px; }
.key { position: absolute; right: -4px; bottom: -2px; width: 14px; height: 14px; }

.sidebar { overflow: hidden; padding-top: 8px; padding-right: 16px; }
.compose { height: 56px; margin: 0 0 16px 8px; padding: 0 22px 0 16px; gap: 16px; border-radius: 16px; background: #c2e7ff; color: #001d35; font: 500 14px/20px Inter, Roboto, sans-serif; }
.row { display: flex; align-items: center; height: 32px; padding: 0 12px 0 26px; gap: 18px; border-radius: 0 16px 16px 0; color: #444746; }
.row span { flex: 1; min-width: 0; white-space: nowrap; }
.row small { margin-left: -12px; font-size: 11px; color: #5f6368; }
.selected { background: #d3e3fd; color: #001d35; }
.selected span, .unread span { font-family: Inter, Roboto, sans-serif; font-weight: 600; }
.unread { color: #202124; }
.labels-head { display: flex; align-items: center; justify-content: space-between; height: 44px; margin-top: 16px; padding: 0 8px 0 26px; }
.labels-head h2 { margin: 0; font-size: 17px; font-weight: 400; }

.card { margin: 0 16px 16px 0; border-radius: 16px; background: #fff; overflow: hidden; }
.actions { display: flex; align-items: center; height: 48px; padding-left: 19px; }
.actions input { appearance: none; width: 14px; height: 14px; margin: 0 9px 0 0; border: 1px solid #444746; outline: 1px solid #a0a2a2; outline-offset: -2px; border-radius: 1px; }
.actions button { width: 20px; height: 20px; color: #444746; }
.actions .caret { width: 8px; }
.caret svg { width: 8px; height: 4px; }
.actions .refresh { margin: 0 20px 0 26px; }
.categories { display: flex; height: 56px; margin-right: 16px; border-bottom: 1px solid #eceff1; }
.category { position: relative; justify-content: flex-start; width: 253px; padding-left: 16px; gap: 16px; font-family: Inter, Roboto, sans-serif; color: #444746; text-align: left; }
.current { color: #0b57d0; }
.current::after { content: ""; position: absolute; left: 8px; right: 10px; bottom: -1px; height: 3px; border-radius: 3px 3px 0 0; background: #0b57d0; }
.stack { display: flex; flex-direction: column; padding-top: 4px; }
.promo { display: flex; align-items: center; gap: 8px; }
.badge { padding: 0 4px; border-radius: 8px; background: #188038; color: #fff; font: 600 12px/16px Inter, sans-serif; }
.senders { font: 12px/20px Roboto, sans-serif; color: #9aa0a6; }

.empty { min-height: calc(50vh - 5px); padding: 80px 16px 0 0; display: flex; justify-content: center; align-items: flex-start; color: #5f6368; }
.empty-text { display: grid; gap: 15px; width: 550px; }
.empty h1, .empty p { margin: 0; font-size: 14px; font-weight: 400; white-space: nowrap; }
.empty h1 { font-size: 16px; }
.empty a { color: #1a56d6; }
.footer { display: grid; grid-template-columns: 1fr auto 1fr; align-items: start; margin-right: 16px; padding: 0 16px; font-size: 12px; line-height: 16px; color: #5f6368; }
.storage { padding-top: 5px; }
.meter { width: 220px; height: 6px; border-radius: 3px; background: #dadce0; overflow: hidden; }
.meter-fill { width: 20px; height: 6px; border-radius: 3px; background: #5f6368; }
.usage { display: flex; align-items: center; gap: 9px; margin-top: 9px; }

/* Taskbar */
.taskbar { flex: none; display: flex; height: 40px; background: linear-gradient(to right, #213a42, #1f3745 50%, #1b2944 80%); color: #fff; }
.taskbar > button { width: 48px; }
.apps { display: flex; gap: 1px; margin-left: 3px; }
.apps button { position: relative; width: 48px; }
.apps .open::after { content: ""; position: absolute; left: 4px; right: 4px; bottom: 0; height: 2px; background: #76b9ed; }
.apps .multi::after { background: linear-gradient(to right, #76b9ed 32px, #4c7fa8 32px); }
.apps .alert { background: #a56a34; }
.apps .alert::after { left: 0; right: 0; background: #ff7a05; }
.apps .focused { background: #4e626b; }
.apps .focused::after { left: 0; right: 0; }
.mini { position: absolute; left: 23px; top: 18px; width: 16px; height: 16px; border-radius: 50%; background: #512da8; font: 10px/16px "Open Sans", sans-serif; text-align: center; }
.mini.orange { background: #bf360c; }
.mini.photo { background: radial-gradient(circle at 35% 40%, #b98a72 2px, transparent 3px), radial-gradient(circle at 65% 40%, #c99a82 2px, transparent 3px), linear-gradient(#2c2422 65%, #c9a877 65%); }
.count { position: absolute; left: 22px; top: 23px; border-radius: 2px; background: #f23c34; font: 9px/11px "Liberation Sans", sans-serif; }
.tray { display: flex; align-items: center; margin-left: auto; }
.tray span { display: flex; justify-content: center; width: 24px; }
.clock { display: flex; flex-direction: column; align-items: center; justify-content: center; width: 64px; font: 11px/18px "Open Sans", sans-serif; }
.taskbar .notify { position: relative; justify-content: flex-start; padding-left: 12px; }
.notify-count { position: absolute; left: 18px; top: 18px; width: 18px; height: 18px; border: 1px solid #8a8f98; border-radius: 50%; background: #33373d; font: 11px/16px "Open Sans", sans-serif; text-align: center; }
.desktop-peek { width: 5px; border-left: 1px solid #6d7789; }
```
